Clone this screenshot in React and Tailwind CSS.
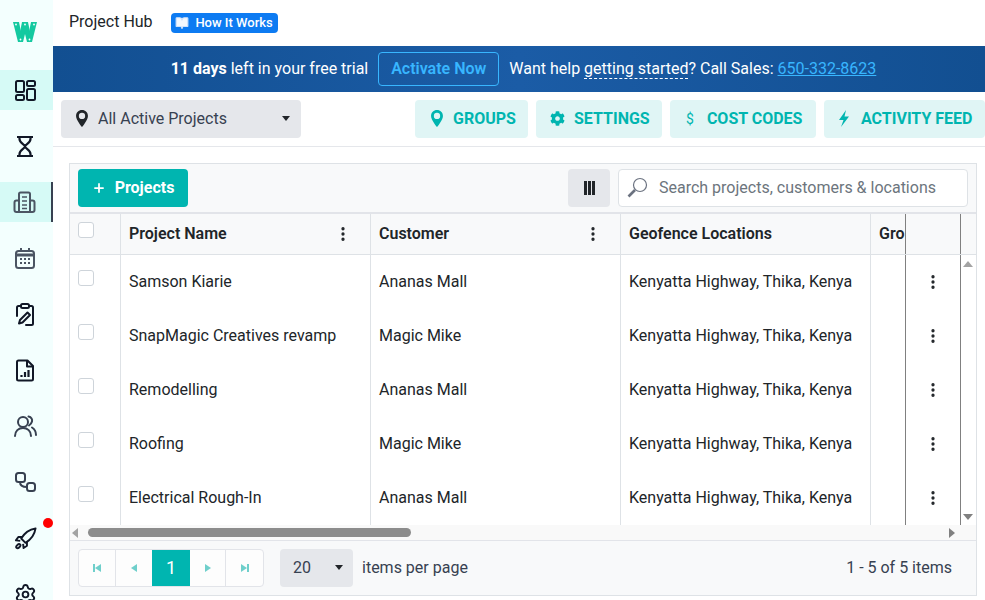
import { BookOpen, EllipsisVertical, Plus, Settings } from "lucide-react";
import { FaCog } from "react-icons/fa";

const rows = [
  { name: "Samson Kiarie", customer: "Ananas Mall" },
  { name: "SnapMagic Creatives revamp", customer: "Magic Mike" },
  { name: "Remodelling", customer: "Ananas Mall" },
  { name: "Roofing", customer: "Magic Mike" },
  { name: "Electrical Rough-In", customer: "Ananas Mall" },
];

const Logo = () => (
  <svg width="24" height="20" viewBox="0 0 24 20">
    <g fill="#14c9a0">
      <polygon points="0,0 6,0 10,20 5,20" />
      <polygon points="5,20 10,20 15,0 9,0" />
      <polygon points="9,0 15,0 19,20 14,20" />
      <polygon points="14,20 19,20 24,0 18,0" />
    </g>
    {[[3, 2.5], [12, 2.5], [21, 2.5], [7.5, 17.5], [16.5, 17.5]].map(([x, y]) => (
      <circle key={x} cx={x} cy={y} r="0.9" fill="#fff" />
    ))}
  </svg>
);

const DashIcon = () => (
  <svg width="21" height="21" viewBox="0 0 21 21" fill="none" stroke="#111827" strokeWidth="2">
    <rect x="1" y="1" width="8" height="11" rx="1.500" />
    <rect x="1" y="15" width="8" height="5" rx="1.500" />
    <rect x="12" y="1" width="8" height="5" rx="1.500" />
    <rect x="12" y="9" width="8" height="11" rx="1.500" />
  </svg>
);

const HourglassIcon = () => (
  <svg width="18" height="23" viewBox="0 0 18 23" fill="none" stroke="#111827" strokeWidth="2.200">
    <path d="M1 2h16M1 21h16" />
    <path d="M3.500 2v2c0 4 5.500 5.500 5.500 7.500S3.500 15 3.500 19v2M14.500 2v2c0 4-5.500 5.500-5.500 7.500s5.500 3.500 5.500 7.500v2" />
  </svg>
);

const BuildingIcon = () => (
  <svg width="23" height="23" viewBox="0 0 23 23" fill="none" stroke="#4b5563" strokeWidth="2" strokeLinejoin="round">
    <path d="M6 21V3a1.500 1.500 0 0 1 1.500-1.500h8A1.500 1.500 0 0 1 17 3v18z" />
    <path d="M6 9.500H3.500A2 2 0 0 0 1.500 11.500V19a2 2 0 0 0 2 2H6M17 9.500h2.500a2 2 0 0 1 2 2V19a2 2 0 0 1-2 2H17" />
    <path d="M9 6h5M9 10h5M9 14h5M9 17.500h5" strokeWidth="1.600" />
  </svg>
);

const CalendarIcon = () => (
  <svg width="22" height="23" viewBox="0 0 22 23" fill="none" stroke="#4b5563" strokeWidth="2">
    <rect x="2" y="4" width="18" height="17" rx="2.500" />
    <path d="M2 8h18" strokeWidth="3" />
    <path d="M7 1v4M15 1v4" />
    <path d="M6 12h2M10 12h2M14 12h2M6 16h2M10 16h2M14 16h2" strokeWidth="1.800" />
  </svg>
);

const ClipboardIcon = () => (
  <svg width="20" height="23" viewBox="0 0 20 23" fill="none" stroke="#111827" strokeWidth="2" strokeLinecap="round" strokeLinejoin="round">
    <rect x="6" y="1" width="8" height="4" rx="1.500" />
    <path d="M6 3H3.500A1.500 1.500 0 0 0 2 4.500V13M14 3h2.500A1.500 1.500 0 0 1 18 4.500V20.500A1.500 1.500 0 0 1 16.500 22H11" />
    <path d="M12.500 9.500l2.500 2.500-7.500 7.500-3.500 1 1-3.500z" />
  </svg>
);

const ReportIcon = () => (
  <svg width="20" height="23" viewBox="0 0 20 23" fill="none" stroke="#111827" strokeWidth="2" strokeLinejoin="round">
    <path d="M3.500 1.500h9l5.500 5.500v13a1.500 1.500 0 0 1-1.500 1.500h-13A1.500 1.500 0 0 1 2 20V3a1.500 1.500 0 0 1 1.500-1.500z" />
    <path d="M12 1.500V7.500h6" />
    <path d="M6.500 18v-2M10 18v-5M13.500 18v-7" strokeWidth="2.200" />
  </svg>
);

const UsersIcon = () => (
  <svg width="23" height="22" viewBox="0 0 23 22" fill="none" stroke="#374151" strokeWidth="2" strokeLinecap="round">
    <circle cx="9" cy="7" r="5" />
    <path d="M1 21c0-5 3.500-8 8-8s8 3 8 8" />
    <path d="M14.500 1.500c3 .5 4 3 3.500 5s-1.500 3-3 4M18 12.500c2.500 1.500 4 4.500 4 7.500" />
  </svg>
);

const LinkedBoxes = () => (
  <svg width="22" height="22" viewBox="0 0 22 22" fill="none" stroke="#374151" strokeWidth="2">
    <rect x="2" y="2" width="9" height="9" rx="2.500" />
    <rect x="13" y="12" width="8" height="8" rx="2.500" />
    <path d="M6 11c0 3.500 2 5 7 5" />
  </svg>
);

const RocketIcon = () => (
  <svg width="23" height="23" viewBox="0 0 24 24" fill="none" stroke="#111827" strokeWidth="2" strokeLinejoin="round">
    <path d="M22.500 1.500C16 2.500 11 6 7.500 12l4.500 4.500c6-3.500 9.500-8.500 10.500-15z" />
    <path d="M8.500 10.500L4.500 10.500 2 14l4.500 .5M13.500 15.500v4L10 22l-.5-4.500" />
    <ellipse cx="4.500" cy="20" rx="2.600" ry="1.600" transform="rotate(-45 4.500 20)" />
  </svg>
);

const sideItems = [
  { icon: <DashIcon />, cls: "bg-[#d6faf6] pr-[3px]" },
  { icon: <HourglassIcon />, cls: "pr-[3px]" },
  { icon: <BuildingIcon />, cls: "bg-[#d6faf6] border-r-2 border-[#374151] pr-[2px]" },
  { icon: <CalendarIcon />, cls: "pr-[3px]" },
  { icon: <ClipboardIcon />, cls: "pr-[3px]" },
  { icon: <ReportIcon />, cls: "pr-[3px]" },
  { icon: <UsersIcon />, cls: "pr-[3px]" },
  { icon: <LinkedBoxes />, cls: "pr-[3px]" },
  { icon: <RocketIcon />, cls: "relative pr-[3px]" },
  { icon: <Settings size={23} strokeWidth={2} color="#111827" />, cls: "pr-[3px]" },
];

const PinIcon = ({ color, w, h }) => (
  <svg width={w} height={h} viewBox="0 0 14 20">
    <path
      fillRule="evenodd"
      fill={color}
      d="M7 0C3 0 0 3 0 7c0 5 7 13 7 13s7-8 7-13c0-4-3-7-7-7zM7 3.300a3.700 3.700 0 1 0 0 7.400 3.700 3.700 0 0 0 0-7.400z"
    />
  </svg>
);

const BoltIcon = () => (
  <svg width="12" height="17" viewBox="0 0 12 17">
    <polygon points="8,0 1,10 5.500,10 3,17 11,6.500 6.500,6.500" fill="#00b5b0" />
  </svg>
);

const SearchGlass = () => (
  <svg width="21" height="21" viewBox="0 0 21 21" fill="none" stroke="#6b7280" className="mr-[11px]">
    <circle cx="13" cy="8" r="6.500" strokeWidth="1.200" />
    <path d="M8 13l-6.500 6.500" strokeWidth="2.600" />
  </svg>
);

const ToolButton = ({ icon, label, cls }) => (
  <button className={`${cls} h-[38px] shrink-0 rounded bg-[#e0f5f5] text-[#00b5b0] font-bold text-base flex items-center`}>
    {icon}
    {label}
  </button>
);

const Triangle = ({ points, color = "#808080", w = 10, h = 10 }) => (
  <svg width={w} height={h} viewBox="0 0 10 10">
    <polygon points={points} fill={color} />
  </svg>
);

const HeaderCell = ({ label, plain }) => (
  <div className="w-[250px] shrink-0 border-r border-[#dee2e6] pl-2 pr-[18px] flex items-center justify-between">
    {label}
    {!plain && <EllipsisVertical size={18} strokeWidth={2.4} color="#212529" />}
  </div>
);

const BodyCell = ({ children }) => (
  <div className="w-[250px] shrink-0 border-r border-[#dee2e6] pl-2 flex items-center whitespace-nowrap">{children}</div>
);

const App = () => {
  return (
    <div className="flex h-[600px] w-[985px] overflow-hidden bg-white text-[#212529] font-['Roboto',sans-serif] text-base">
      {/* Sidebar */}
      <aside className="w-[53px] shrink-0 bg-[#f3fffe] flex flex-col">
        <div className="h-[70px] shrink-0 flex items-center justify-center pb-[6px] pr-[3px]">
          <Logo />
        </div>
        <div className="flex flex-col gap-4">
          {sideItems.map((item, i) => (
            <div key={i} className={`h-[40px] shrink-0 flex items-center justify-center ${item.cls}`}>
              {item.icon}
              {i === 8 && <span className="absolute right-0 top-0 w-[10px] h-[10px] rounded-full bg-[#ff0000]" />}
            </div>
          ))}
        </div>
      </aside>

      <main className="flex-1 min-w-0 flex flex-col">
        <header className="h-[46px] shrink-0 pl-4 flex items-center gap-[18px] pb-[2px]">
          <span>Project Hub</span>
          <span className="h-5 w-[107px] rounded bg-[#0d7bf2] text-white text-[13px] font-medium flex items-center justify-center gap-[6px] mt-[2px]">
            <BookOpen size={14} color="#cfe2fb" fill="#f4f8fe" />
            How It Works
          </span>
        </header>

        {/* Trial banner */}
        <div className="h-[46px] shrink-0 bg-[linear-gradient(90deg,#124f91,#1b5ca6_50%,#124f91)] text-white flex items-center justify-center pl-[9px] whitespace-nowrap">
          <span><b className="font-bold">11 days</b> left in your free trial</span>
          <button className="mx-[10px] h-[34px] w-[121px] rounded border border-[#38b6ff] text-[#38b6ff] font-semibold">Activate Now</button>
          <span>Want help <span className="border-b border-dashed border-white">getting started</span>? Call Sales: <a className="underline text-[#38b6ff]">650-332-8623</a></span>
        </div>

        {/* Toolbar */}
        <div className="h-[55px] shrink-0 border-b border-[#e5e7eb] flex items-center pl-2 pb-[1px]">
          <div className="w-[240px] h-[38px] shrink-0 rounded bg-[#e5e7eb] flex items-center pl-[15px] pr-[10px] gap-[10px] text-[#374151]">
            <PinIcon color="#212529" w={12} h={17} />
            All Active Projects
            <span className="ml-auto flex"><Triangle points="1,2 9,2 5,7" color="#212529" /></span>
          </div>
          <div className="ml-[114px] flex gap-2">
            <ToolButton cls="w-[113px] pl-4 gap-[10px]" label="GROUPS" icon={<PinIcon color="#00b5b0" w={12} h={17} />} />
            <ToolButton cls="w-[126px] pl-[14px] gap-[9px]" label="SETTINGS" icon={<FaCog size={15} />} />
            <ToolButton cls="w-[146px] pl-4 gap-[13px]" label="COST CODES" icon={<span className="text-sm font-normal">$</span>} />
            <ToolButton cls="w-[161px] pl-[14px] gap-[11px]" label="ACTIVITY FEED" icon={<BoltIcon />} />
          </div>
        </div>

        {/* Grid */}
        <div className="pt-4 pl-4 pr-2 pb-1">
          <div className="w-[908px] h-[433px] border border-[#dee2e6] flex flex-col">
            <div className="h-[50px] shrink-0 bg-[#f8f9fa] border-b-2 border-[#e2e4e9] flex items-center pl-2 pr-2 pb-[1px]">
              <button className="w-[110px] h-[38px] rounded bg-[#00b5b0] text-white font-bold flex items-center justify-center gap-[9px]">
                <Plus size={14} strokeWidth={3} />
                Projects
              </button>
              <button className="ml-auto w-[42px] h-[38px] rounded bg-[#e5e7eb] flex items-center justify-center gap-[1px]">
                <span className="w-[3px] h-[14px] bg-[#212529]" />
                <span className="w-[3px] h-[14px] bg-[#212529]" />
                <span className="w-[3px] h-[14px] bg-[#212529]" />
              </button>
              <div className="ml-2 w-[350px] h-[38px] rounded bg-white border border-[#dee2e6] flex items-center pl-2 text-[#6c757d]">
                <SearchGlass />
                Search projects, customers &amp; locations
              </div>
            </div>

            {/* Table, with the fixed action column and the vertical scrollbar */}
            <div className="h-[326px] shrink-0 flex flex-col">
              <div className="h-[41px] shrink-0 flex bg-[#f8f9fa] border-b border-[#dee2e6] font-semibold">
                <div className="w-[51px] shrink-0 border-r border-[#dee2e6] pl-2 pt-2">
                  <div className="w-4 h-4 rounded-[3px] border border-[#ced4da] bg-white" />
                </div>
                <HeaderCell label="Project Name" />
                <HeaderCell label="Customer" />
                <HeaderCell label="Geofence Locations" plain />
                <div className="w-[35px] shrink-0 border-r border-[#808080] pl-2 flex items-center overflow-hidden">Gro</div>
                <div className="w-[55px] shrink-0 border-r border-[#808080]" />
                <div className="flex-1" />
              </div>
              <div className="flex-1 min-h-0 flex">
                <div className="flex-1 min-w-0 overflow-hidden">
                  {rows.map((r) => (
                    <div key={r.name} className="h-[54px] flex">
                      <div className="w-[51px] shrink-0 border-r border-[#dee2e6] pl-2 pt-[15px]">
                        <div className="w-4 h-4 rounded-[3px] border border-[#ced4da] bg-white" />
                      </div>
                      <BodyCell>{r.name}</BodyCell>
                      <BodyCell>{r.customer}</BodyCell>
                      <BodyCell>Kenyatta Highway, Thika, Kenya</BodyCell>
                      <div className="w-[35px] shrink-0 border-r border-[#808080]" />
                      <div className="w-[55px] shrink-0 border-r border-[#808080] flex items-center justify-center">
                        <EllipsisVertical size={18} strokeWidth={2.4} color="#212529" />
                      </div>
                    </div>
                  ))}
                </div>
                <div className="w-[15px] shrink-0 bg-white flex flex-col items-center justify-between pt-1 pb-[3px] pr-[1px]">
                  <Triangle points="0,8 5,2 10,8" color="#a3a3a3" />
                  <Triangle points="0,2 10,2 5,8" color="#808080" />
                </div>
              </div>
              <div className="h-[15px] shrink-0 bg-[#f9f9f9] flex items-center">
                <Triangle points="8,0 8,10 2,5" color="#a3a3a3" />
                <div className="w-[323px] h-[9px] rounded-full bg-[#8c8c8c] ml-[8px]" />
                <div className="ml-auto mr-[19px]"><Triangle points="2,0 2,10 8,5" color="#808080" /></div>
              </div>
            </div>

            {/* Footer pager */}
            <div className="flex-1 bg-[#f8f9fa] border-t border-[#e2e4e9] flex items-center pl-2 pr-6">
              <div className="h-[38px] w-[186px] flex rounded border border-[#e2e4e9] bg-[#fdfdfd]">
                <div className="w-[37px] border-r border-[#e2e4e9] flex items-center justify-center">
                  <svg width="10" height="10" viewBox="0 0 10 10" fill="#6fcfcb"><rect x="1" y="1" width="2" height="8" /><polygon points="9,1 9,9 3,5" /></svg>
                </div>
                <div className="w-[36px] flex items-center justify-center">
                  <Triangle points="8,1 8,9 2,5" color="#6fcfcb" />
                </div>
                <div className="w-[38px] bg-[#00b5b0] text-white text-lg flex items-center justify-center">1</div>
                <div className="w-[36px] border-r border-[#e2e4e9] flex items-center justify-center">
                  <Triangle points="2,1 2,9 8,5" color="#6fcfcb" />
                </div>
                <div className="flex-1 flex items-center justify-center">
                  <svg width="10" height="10" viewBox="0 0 10 10" fill="#6fcfcb"><polygon points="1,1 1,9 7,5" /><rect x="7" y="1" width="2" height="8" /></svg>
                </div>
              </div>
              <div className="ml-4 w-[73px] h-[38px] rounded bg-[#e5e7eb] flex items-center justify-between pl-[13px] pr-[9px] text-[#374151]">
                20
                <Triangle points="1,2 9,2 5,7" color="#212529" />
              </div>
              <span className="ml-[9px] text-[#374151]">items per page</span>
              <span className="ml-auto text-[#374151]">1 - 5 of 5 items</span>
            </div>
          </div>
        </div>
      </main>
    </div>
  );
};

export default App;
